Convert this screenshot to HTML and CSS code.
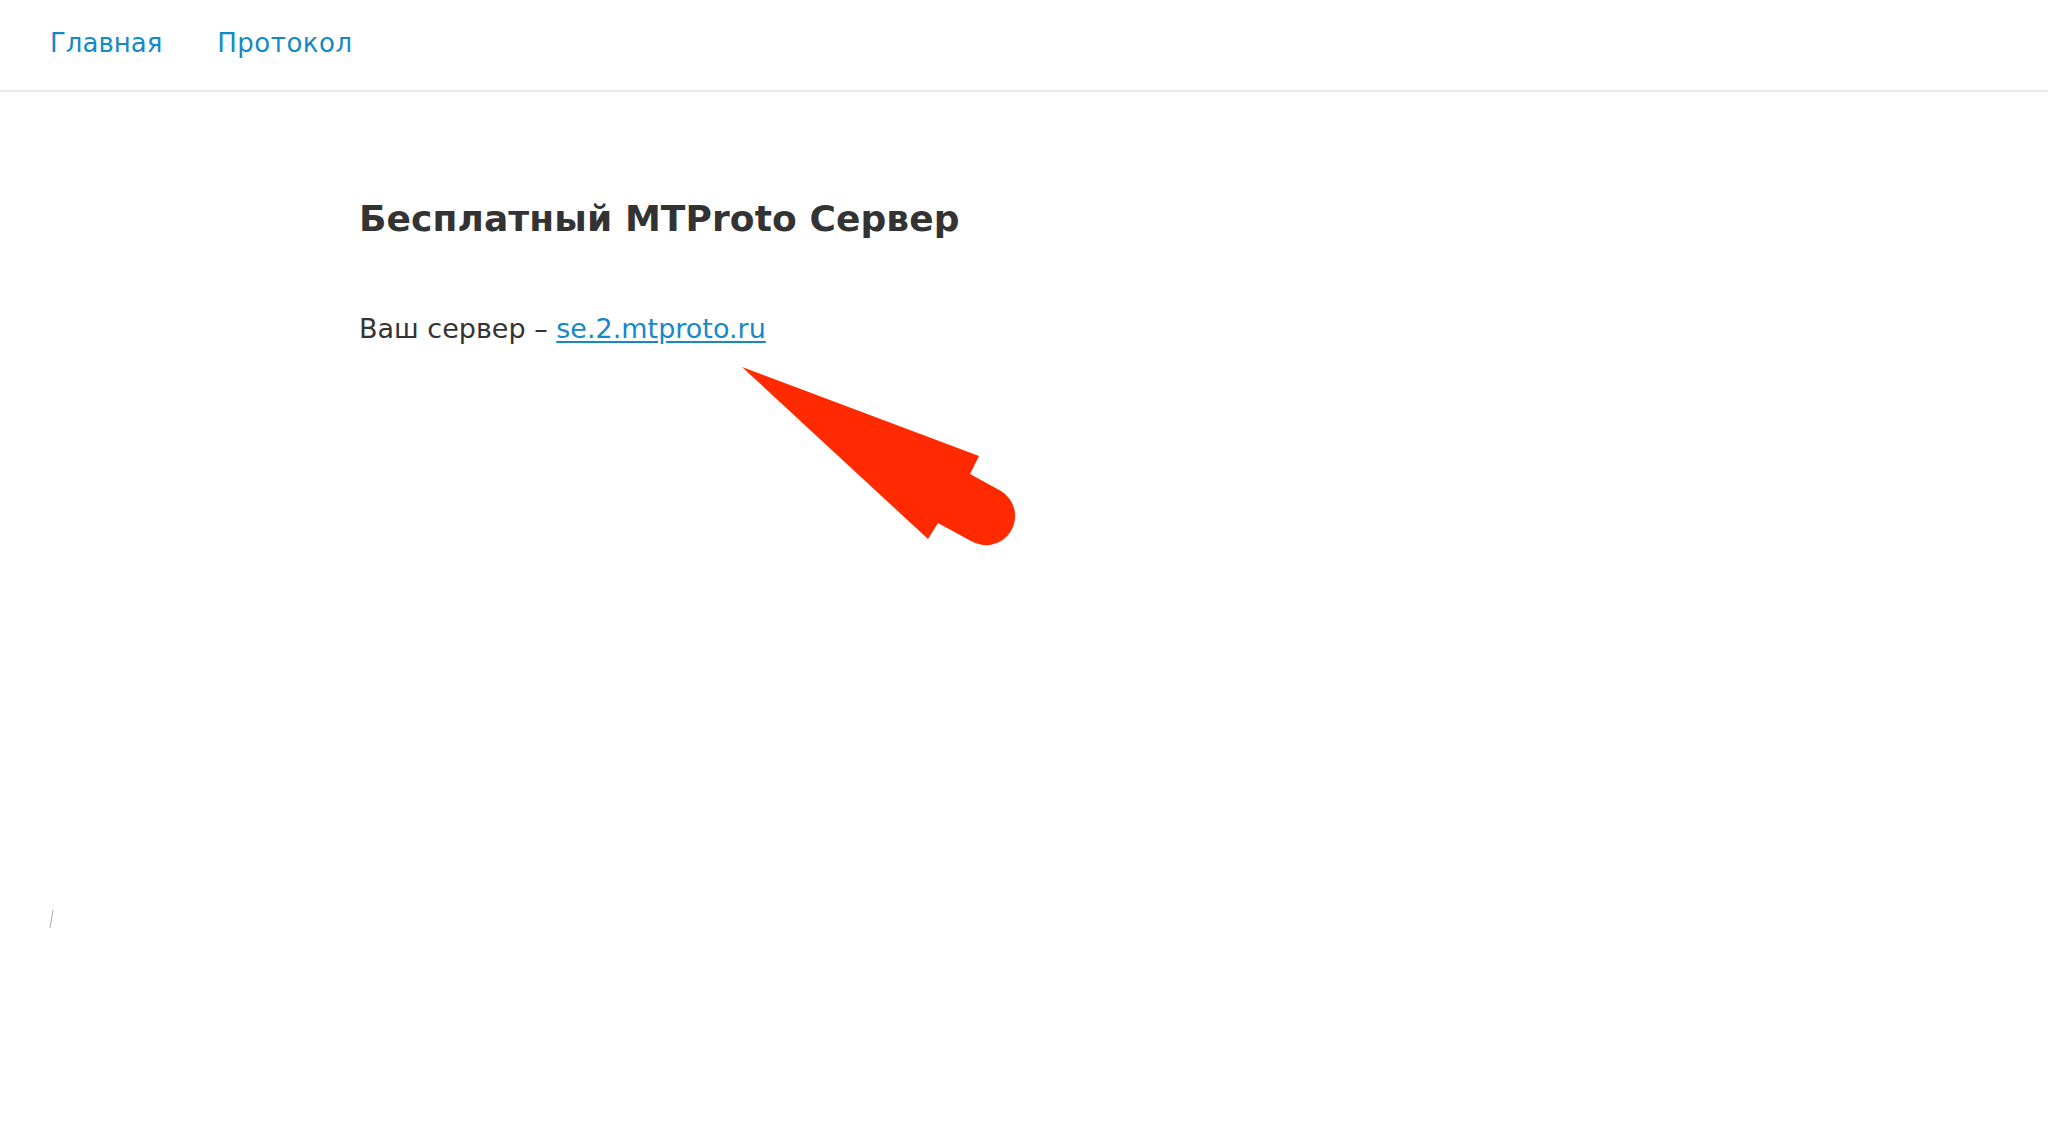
FILE: index.html
```html
<!DOCTYPE html>
<html lang="ru">
<head>
<meta charset="utf-8">
<title>Бесплатный MTProto Сервер</title>
<link rel="stylesheet" href="styles.css">
</head>
<body>
<header class="topbar">
  <nav class="nav">
    <a class="nav-link" href="#">Главная</a>
    <a class="nav-link" href="#">Протокол</a>
  </nav>
</header>
<main class="content">
  <h1 class="title">Бесплатный MTProto Сервер</h1>
  <p class="server">Ваш сервер – <a class="server-link" href="#">se.2.mtproto.ru</a></p>
</main>
<svg class="arrow" width="290" height="195" viewBox="0 0 290 195" aria-hidden="true">
  <path d="M7 7 L244 96 L235 114 L266 131 A29 29 0 0 1 236 181 L203 163 L193 179 Z" fill="#ff2a00"/>
</svg>
<svg class="mark" width="8" height="22" viewBox="0 0 8 22" aria-hidden="true">
  <line x1="5" y1="2" x2="2" y2="20" stroke="#b8b8b8" stroke-width="1.2"/>
</svg>
</body>
</html>
```

FILE: styles.css
```css
html, body {
  margin: 0;
  padding: 0;
  background: #ffffff;
}

body {
  font-family: "DejaVu Sans", "Liberation Sans", sans-serif;
  color: #333333;
  min-height: 1135px;
  position: relative;
}

.topbar {
  padding: 27px 0 31px 50px;
  border-bottom: 2px solid #e8e8e8;
}

.nav {
  display: flex;
  gap: 55px;
}

.nav-link {
  font-size: 26px;
  line-height: 32px;
  color: #1589c8;
  text-decoration: none;
}

.nav-link + .nav-link {
  letter-spacing: 0.5px;
}

.content {
  padding-left: 359px;
}

.title {
  margin: 105px 0 0 0;
  font-size: 36px;
  line-height: 1.2;
  font-weight: bold;
  color: #333333;
  letter-spacing: 0.1px;
}

.server {
  margin: 69px 0 0 0;
  font-size: 27px;
  line-height: 1.5;
  color: #333333;
}

.server-link {
  color: #1589c8;
  text-decoration: underline;
  text-underline-offset: 3px;
}

.arrow {
  position: absolute;
  left: 735px;
  top: 360px;
}

.mark {
  position: absolute;
  left: 48px;
  top: 908px;
}
```
